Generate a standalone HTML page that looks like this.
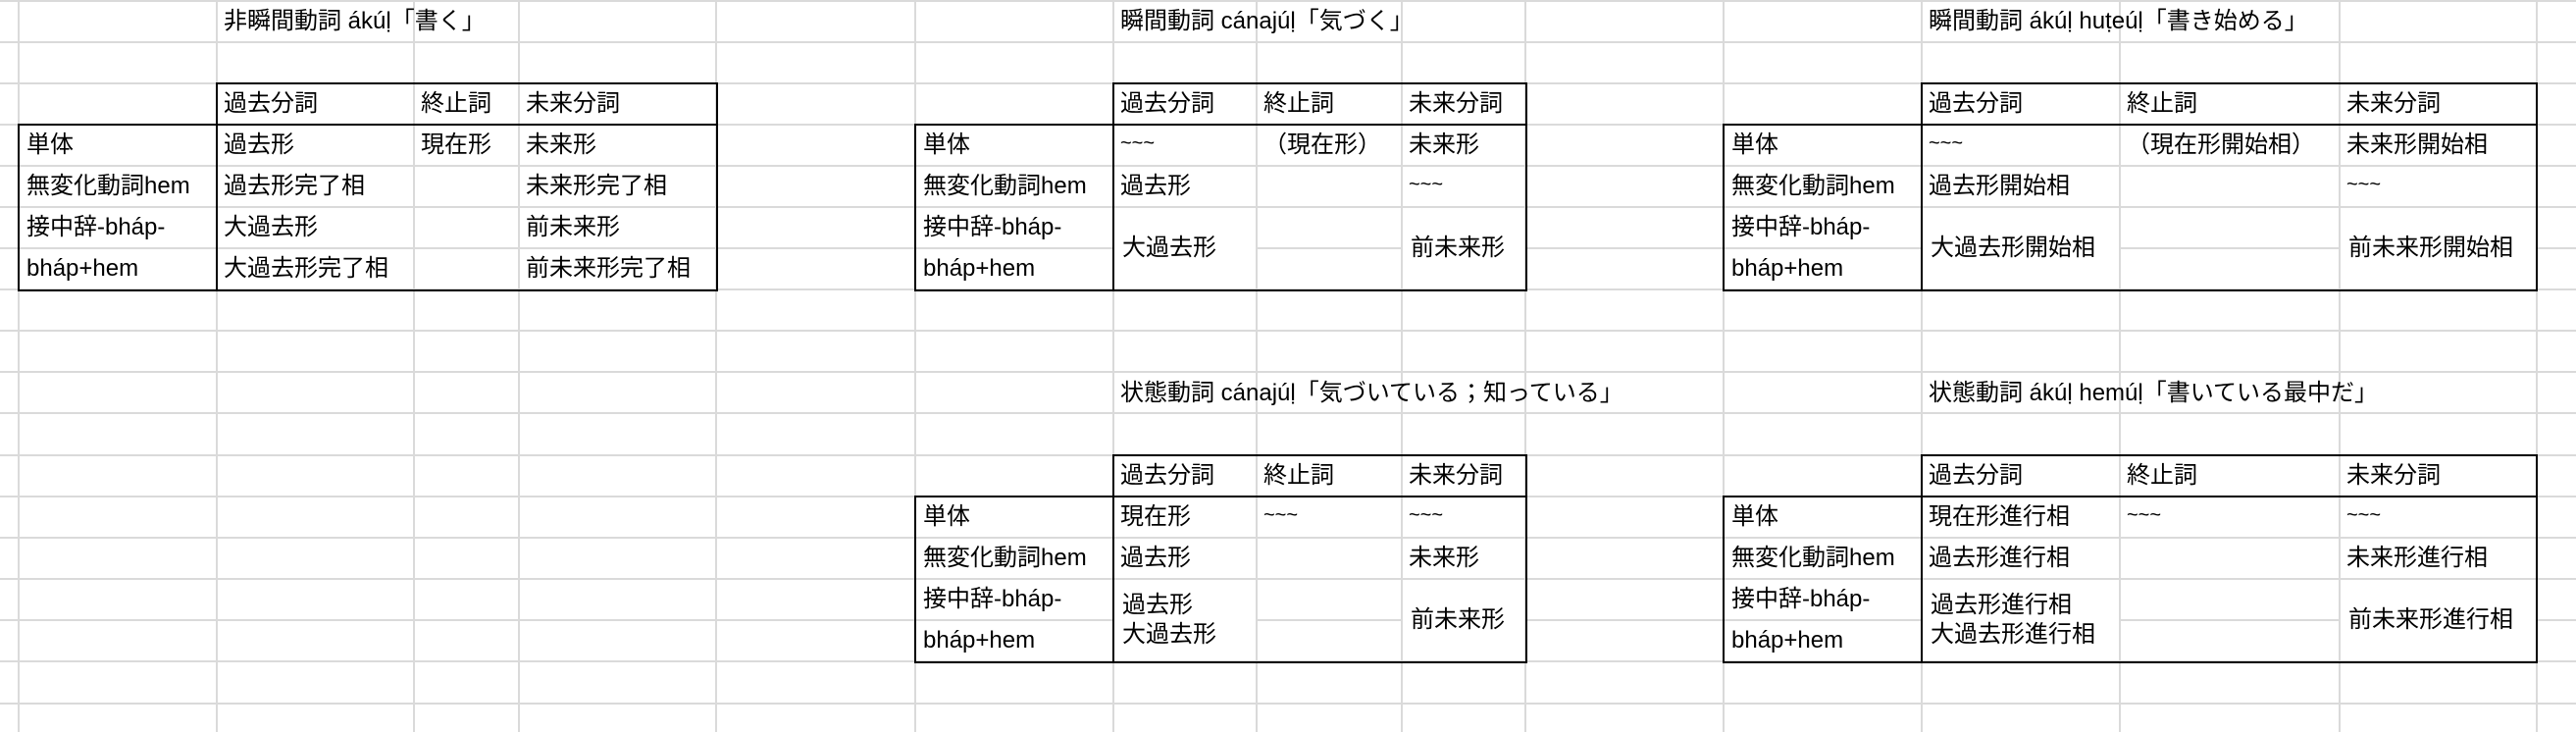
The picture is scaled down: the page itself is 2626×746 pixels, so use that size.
<!DOCTYPE html>
<html><head><meta charset="utf-8">
<style>
html,body{margin:0;padding:0;}
body{width:2626px;height:746px;position:relative;overflow:hidden;background:#fff;font-family:"Liberation Sans","Noto Sans CJK JP",sans-serif;color:#000;}
.v{position:absolute;top:0;height:746px;width:2px;background:#dadada;}
.h{position:absolute;left:0;width:2626px;height:2px;background:#dadada;}
.c{position:absolute;height:42px;line-height:44px;padding-left:8px;font-size:24px;white-space:nowrap;box-sizing:border-box;}
.m{position:absolute;background:#fff;font-size:24px;line-height:30px;padding-left:8px;box-sizing:border-box;display:flex;flex-direction:column;justify-content:center;white-space:nowrap;}
.t{font-size:20px;line-height:40px;}
.b{position:absolute;border:2px solid #000;box-sizing:border-box;}
.bl{position:absolute;width:2px;background:#000;}
</style></head><body>
<!-- vertical grid -->
<div class="v" style="left:18px"></div><div class="v" style="left:220px"></div><div class="v" style="left:421px"></div><div class="v" style="left:528px"></div><div class="v" style="left:729px"></div><div class="v" style="left:932px"></div><div class="v" style="left:1134px"></div><div class="v" style="left:1280px"></div><div class="v" style="left:1428px"></div><div class="v" style="left:1554px"></div><div class="v" style="left:1756px"></div><div class="v" style="left:1958px"></div><div class="v" style="left:2160px"></div><div class="v" style="left:2384px"></div><div class="v" style="left:2585px"></div>
<!-- horizontal grid -->
<div class="h" style="top:0"></div><div class="h" style="top:42px"></div><div class="h" style="top:84px"></div><div class="h" style="top:126px"></div><div class="h" style="top:168px"></div><div class="h" style="top:210px"></div><div class="h" style="top:252px"></div><div class="h" style="top:294px"></div><div class="h" style="top:336px"></div><div class="h" style="top:378px"></div><div class="h" style="top:420px"></div><div class="h" style="top:463px"></div><div class="h" style="top:505px"></div><div class="h" style="top:547px"></div><div class="h" style="top:589px"></div><div class="h" style="top:631px"></div><div class="h" style="top:673px"></div><div class="h" style="top:716px"></div>

<!-- Table 1 -->
<div class="c" style="left:220px;top:0">非瞬間動詞 ákúḷ「書く」</div>
<div class="c" style="left:220px;top:84px">過去分詞</div><div class="c" style="left:421px;top:84px">終止詞</div><div class="c" style="left:528px;top:84px">未来分詞</div>
<div class="c" style="left:19px;top:126px">単体</div><div class="c" style="left:220px;top:126px">過去形</div><div class="c" style="left:421px;top:126px">現在形</div><div class="c" style="left:528px;top:126px">未来形</div>
<div class="c" style="left:19px;top:168px">無変化動詞hem</div><div class="c" style="left:220px;top:168px">過去形完了相</div><div class="c" style="left:528px;top:168px">未来形完了相</div>
<div class="c" style="left:19px;top:210px">接中辞-bháp-</div><div class="c" style="left:220px;top:210px">大過去形</div><div class="c" style="left:528px;top:210px">前未来形</div>
<div class="c" style="left:19px;top:252px">bháp+hem</div><div class="c" style="left:220px;top:252px">大過去形完了相</div><div class="c" style="left:528px;top:252px">前未来形完了相</div>
<div class="b" style="left:220px;top:84px;width:512px;height:44px"></div>
<div class="b" style="left:18px;top:126px;width:714px;height:171px"></div>
<div class="bl" style="left:220px;top:126px;height:170px"></div>

<!-- Table 2 top -->
<div class="c" style="left:1134px;top:0">瞬間動詞 cánajúḷ「気づく」</div>
<div class="c" style="left:1134px;top:84px">過去分詞</div><div class="c" style="left:1280px;top:84px">終止詞</div><div class="c" style="left:1428px;top:84px">未来分詞</div>
<div class="c" style="left:933px;top:126px">単体</div><div class="c t" style="left:1134px;top:126px">~~~</div><div class="c" style="left:1280px;top:126px">（現在形）</div><div class="c" style="left:1428px;top:126px">未来形</div>
<div class="c" style="left:933px;top:168px">無変化動詞hem</div><div class="c" style="left:1134px;top:168px">過去形</div><div class="c t" style="left:1428px;top:168px">~~~</div>
<div class="c" style="left:933px;top:210px">接中辞-bháp-</div><div class="c" style="left:933px;top:252px">bháp+hem</div>
<div class="m" style="left:1136px;top:212px;width:144px;height:82px">大過去形</div>
<div class="m" style="left:1430px;top:212px;width:124px;height:82px">前未来形</div>
<div class="b" style="left:1134px;top:84px;width:423px;height:44px"></div>
<div class="b" style="left:932px;top:126px;width:625px;height:171px"></div>
<div class="bl" style="left:1134px;top:126px;height:170px"></div>

<!-- Table 3 top -->
<div class="c" style="left:1958px;top:0">瞬間動詞 ákúḷ huṭeúḷ「書き始める」</div>
<div class="c" style="left:1958px;top:84px">過去分詞</div><div class="c" style="left:2160px;top:84px">終止詞</div><div class="c" style="left:2384px;top:84px">未来分詞</div>
<div class="c" style="left:1757px;top:126px">単体</div><div class="c t" style="left:1958px;top:126px">~~~</div><div class="c" style="left:2160px;top:126px">（現在形開始相）</div><div class="c" style="left:2384px;top:126px">未来形開始相</div>
<div class="c" style="left:1757px;top:168px">無変化動詞hem</div><div class="c" style="left:1958px;top:168px">過去形開始相</div><div class="c t" style="left:2384px;top:168px">~~~</div>
<div class="c" style="left:1757px;top:210px">接中辞-bháp-</div><div class="c" style="left:1757px;top:252px">bháp+hem</div>
<div class="m" style="left:1960px;top:212px;width:200px;height:82px">大過去形開始相</div>
<div class="m" style="left:2386px;top:212px;width:199px;height:82px">前未来形開始相</div>
<div class="b" style="left:1958px;top:84px;width:629px;height:44px"></div>
<div class="b" style="left:1756px;top:126px;width:831px;height:171px"></div>
<div class="bl" style="left:1958px;top:126px;height:170px"></div>

<!-- Table 2 bottom -->
<div class="c" style="left:1134px;top:379px">状態動詞 cánajúḷ「気づいている；知っている」</div>
<div class="c" style="left:1134px;top:463px">過去分詞</div><div class="c" style="left:1280px;top:463px">終止詞</div><div class="c" style="left:1428px;top:463px">未来分詞</div>
<div class="c" style="left:933px;top:505px">単体</div><div class="c" style="left:1134px;top:505px">現在形</div><div class="c t" style="left:1280px;top:505px">~~~</div><div class="c t" style="left:1428px;top:505px">~~~</div>
<div class="c" style="left:933px;top:547px">無変化動詞hem</div><div class="c" style="left:1134px;top:547px">過去形</div><div class="c" style="left:1428px;top:547px">未来形</div>
<div class="c" style="left:933px;top:589px">接中辞-bháp-</div><div class="c" style="left:933px;top:631px">bháp+hem</div>
<div class="m" style="left:1136px;top:591px;width:144px;height:82px"><div>過去形</div><div>大過去形</div></div>
<div class="m" style="left:1430px;top:591px;width:124px;height:82px">前未来形</div>
<div class="b" style="left:1134px;top:463px;width:423px;height:44px"></div>
<div class="b" style="left:932px;top:505px;width:625px;height:171px"></div>
<div class="bl" style="left:1134px;top:505px;height:170px"></div>

<!-- Table 3 bottom -->
<div class="c" style="left:1958px;top:379px">状態動詞 ákúḷ hemúḷ「書いている最中だ」</div>
<div class="c" style="left:1958px;top:463px">過去分詞</div><div class="c" style="left:2160px;top:463px">終止詞</div><div class="c" style="left:2384px;top:463px">未来分詞</div>
<div class="c" style="left:1757px;top:505px">単体</div><div class="c" style="left:1958px;top:505px">現在形進行相</div><div class="c t" style="left:2160px;top:505px">~~~</div><div class="c t" style="left:2384px;top:505px">~~~</div>
<div class="c" style="left:1757px;top:547px">無変化動詞hem</div><div class="c" style="left:1958px;top:547px">過去形進行相</div><div class="c" style="left:2384px;top:547px">未来形進行相</div>
<div class="c" style="left:1757px;top:589px">接中辞-bháp-</div><div class="c" style="left:1757px;top:631px">bháp+hem</div>
<div class="m" style="left:1960px;top:591px;width:200px;height:82px"><div>過去形進行相</div><div>大過去形進行相</div></div>
<div class="m" style="left:2386px;top:591px;width:199px;height:82px">前未来形進行相</div>
<div class="b" style="left:1958px;top:463px;width:629px;height:44px"></div>
<div class="b" style="left:1756px;top:505px;width:831px;height:171px"></div>
<div class="bl" style="left:1958px;top:505px;height:170px"></div>
</body></html>
